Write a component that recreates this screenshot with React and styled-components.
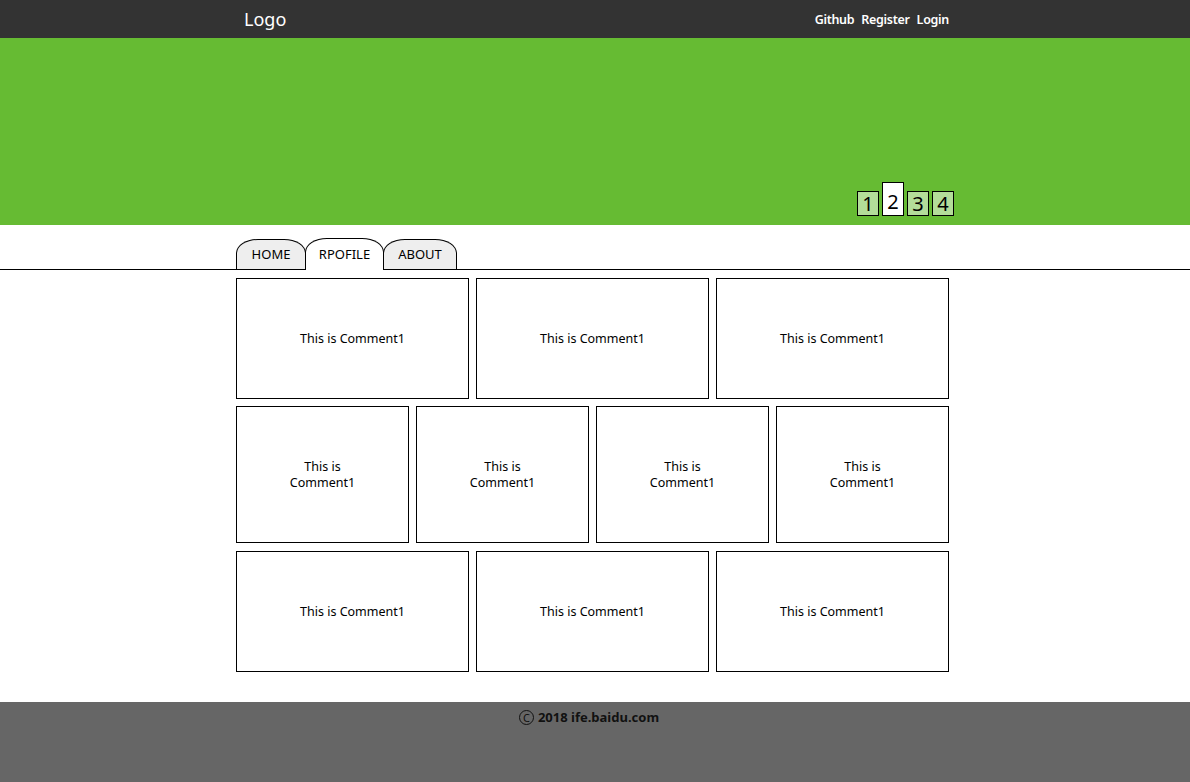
import React from "react";
import styled, { createGlobalStyle } from "styled-components";

const GlobalStyle = createGlobalStyle`
  html, body {
    margin: 0;
    padding: 0;
    background: #fff;
    font-family: "Noto Sans", "Open Sans", sans-serif;
    color: #000;
  }
`;

const Page = styled.div`
  width: 1190px;
  min-height: 782px;
  display: flex;
  flex-direction: column;
`;

const Header = styled.header`
  height: 38px;
  background: #333;
`;

const Inner = styled.div`
  width: 720px;
  margin: 0 auto;
  padding-left: ${(p) => p.$pl || 0}px;
  box-sizing: border-box;
`;

const HeaderInner = styled(Inner)`
  height: 100%;
  display: flex;
  align-items: center;
  justify-content: space-between;
  padding-left: 9px;
  padding-right: 6px;
`;

const Logo = styled.div`
  color: #fff;
  font-size: 18px;
  line-height: 1;
  margin-top: -1px;
`;

const Nav = styled.nav`
  display: flex;
  gap: 7px;
`;

const NavLink = styled.a`
  color: #fff;
  font-size: 12.5px;
  font-weight: 600;
  letter-spacing: -0.3px;
  text-decoration: none;
`;

const Banner = styled.div`
  height: 187px;
  background: #66bb33;
`;

const BannerInner = styled(Inner)`
  height: 100%;
  display: flex;
  justify-content: flex-end;
  align-items: flex-end;
  padding-bottom: 9px;
  padding-right: 1px;
`;

const Pager = styled.div`
  display: flex;
  align-items: flex-end;
  gap: 3px;
`;

const PageBtn = styled.span`
  width: 22px;
  height: ${(p) => (p.$active ? 34 : 25)}px;
  box-sizing: border-box;
  border: 1px solid #000;
  background: ${(p) => (p.$active ? "#fff" : "#b3dd99")};
  font-size: 20px;
  line-height: ${(p) => (p.$active ? 38 : 23)}px;
  text-align: center;
  font-family: "Noto Sans", sans-serif;
`;

const TabBar = styled.div`
  margin-top: 13px;
  border-bottom: 1px solid #000;
`;

const TabRow = styled(Inner)`
  display: flex;
  align-items: flex-end;
  height: 31px;
`;

const Tab = styled.div`
  box-sizing: border-box;
  width: ${(p) => p.$w}px;
  height: ${(p) => (p.$active ? 32 : 30)}px;
  margin-bottom: ${(p) => (p.$active ? -1 : 0)}px;
  border: 1px solid #000;
  border-bottom: none;
  border-radius: 22px 22px 0 0 / 14px 14px 0 0;
  background: ${(p) => (p.$active ? "#fff" : "#eee")};
  font-size: 13px;
  display: flex;
  align-items: center;
  justify-content: center;
  padding-bottom: ${(p) => (p.$active ? 1 : 2)}px;
  position: relative;
  z-index: ${(p) => (p.$active ? 1 : 0)};

  & + & {
    margin-left: -1px;
  }
`;

const Content = styled(Inner)`
  padding-top: 8px;
  padding-left: 1px;
  padding-right: 6px;
  display: flex;
  flex-direction: column;
  gap: 7px;
`;

const CardRow = styled.div`
  display: grid;
  grid-template-columns: repeat(${(p) => p.$cols}, 1fr);
  column-gap: 7px;
  height: ${(p) => p.$h}px;
  margin-top: ${(p) => p.$mt || 0}px;
`;

const Card = styled.div`
  box-sizing: border-box;
  border: 1px solid #000;
  display: flex;
  align-items: center;
  justify-content: center;
  text-align: center;
  font-size: 12.5px;
  line-height: 16px;
  padding: 0 ${(p) => (p.$narrow ? 50 : 10)}px;
`;

const Footer = styled.footer`
  margin-top: 30px;
  height: 80px;
  background: #666;
  display: flex;
  justify-content: center;
  padding-top: 5px;
  box-sizing: border-box;
`;

const FooterText = styled.div`
  font-size: 13px;
  font-weight: 700;
  color: #111;
  display: flex;
  align-items: center;
  gap: 4px;
  margin-left: -12px;
  height: 20px;
`;

const Copy = styled.span`
  display: inline-flex;
  width: 15px;
  height: 15px;
  border: 1.3px solid #111;
  border-radius: 50%;
  font-size: 11px;
  font-weight: 400;
  align-items: center;
  justify-content: center;
  box-sizing: border-box;
  line-height: 1;
`;

const text = "This is Comment1";

function App() {
  return (
    <Page>
      <GlobalStyle />
      <Header>
        <HeaderInner>
          <Logo>Logo</Logo>
          <Nav>
            <NavLink href="#">Github</NavLink>
            <NavLink href="#">Register</NavLink>
            <NavLink href="#">Login</NavLink>
          </Nav>
        </HeaderInner>
      </Header>
      <Banner>
        <BannerInner>
          <Pager>
            <PageBtn>1</PageBtn>
            <PageBtn $active>2</PageBtn>
            <PageBtn>3</PageBtn>
            <PageBtn>4</PageBtn>
          </Pager>
        </BannerInner>
      </Banner>
      <TabBar>
        <TabRow $pl={1}>
          <Tab $w={70}>HOME</Tab>
          <Tab $w={79} $active>RPOFILE</Tab>
          <Tab $w={74}>ABOUT</Tab>
        </TabRow>
      </TabBar>
      <Content>
        <CardRow $cols={3} $h={121}>
          <Card>{text}</Card>
          <Card>{text}</Card>
          <Card>{text}</Card>
        </CardRow>
        <CardRow $cols={4} $h={137}>
          <Card $narrow>{text}</Card>
          <Card $narrow>{text}</Card>
          <Card $narrow>{text}</Card>
          <Card $narrow>{text}</Card>
        </CardRow>
        <CardRow $cols={3} $h={121} $mt={1}>
          <Card>{text}</Card>
          <Card>{text}</Card>
          <Card>{text}</Card>
        </CardRow>
      </Content>
      <Footer>
        <FooterText>
          <Copy>C</Copy>
          2018 ife.baidu.com
        </FooterText>
      </Footer>
    </Page>
  );
}

export default App;
